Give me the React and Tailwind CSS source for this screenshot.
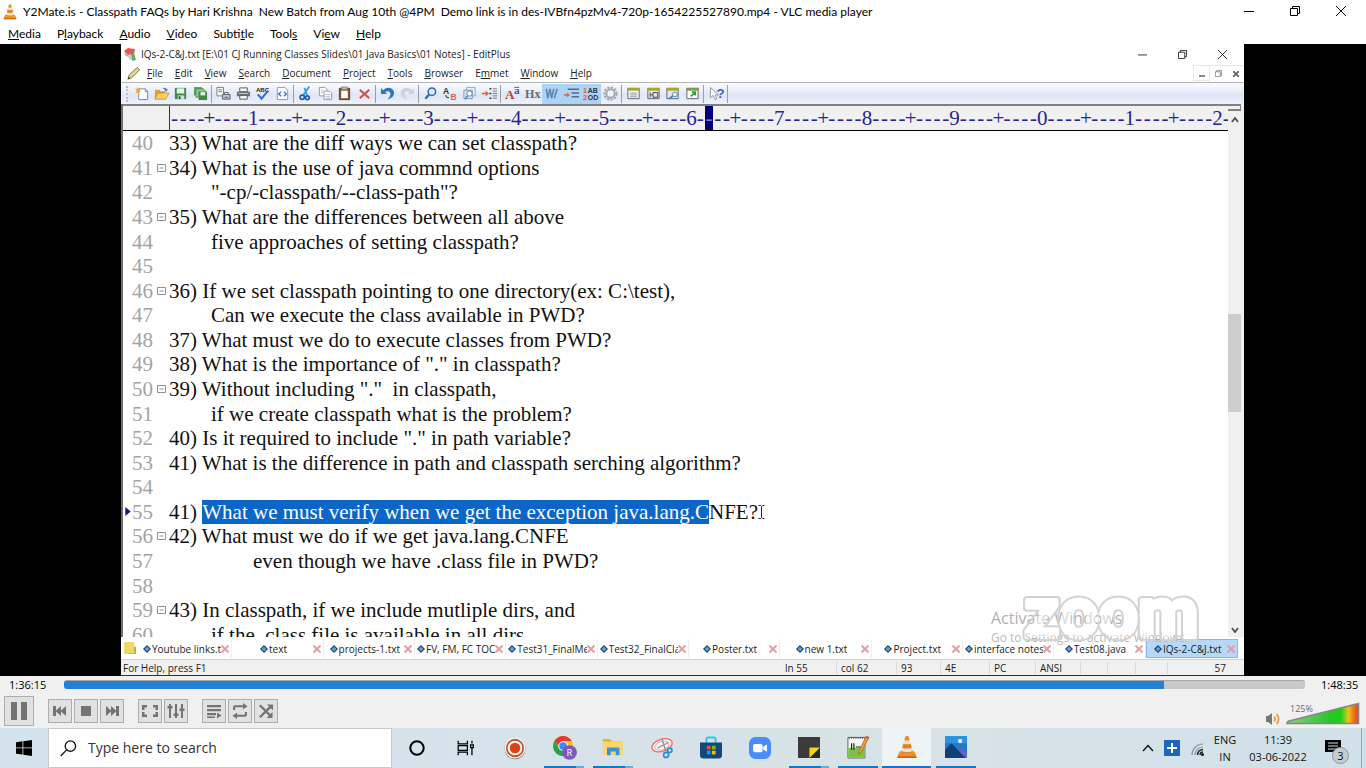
import React from "react";

const UI = "font-['Open_Sans','Noto_Sans',sans-serif]";
const SERIF = "font-['Liberation_Serif',serif]";

/* ---------- shared pieces ---------- */

function Cone({ className }) {
  return (
    <svg viewBox="0 0 24 24" className={className} aria-hidden="true">
      <path d="M4.6 16.5h14.8l2.1 5c.2.8-.2 1.5-1 1.5h-17c-.8 0-1.2-.7-1-1.5z" fill="#ef8a1d" />
      <path d="M2.5 21.5h19v.4c0 .7-.4 1.1-1 1.1h-17c-.6 0-1-.4-1-1.1z" fill="#c9600a" />
      <path d="M10.4 1.6c.3-.9 2.9-.9 3.2 0L18.500 18c-1 2.300-12 2.300-13 0z" fill="#e4e4e4" />
      <path d="M10.4 1.6c.3-.9 2.9-.9 3.2 0l1 3.4c-1 .8-4.200.8-5.200 0z" fill="#f08a24" />
      <path d="M8.400 8.400c1.600 1.200 5.600 1.200 7.200 0l1.200 4c-1.900 1.600-7.700 1.600-9.600 0z" fill="#ee7f16" />
      <path d="M6.200 15.600c2.200 2 9.400 2 11.600 0l.7 2.400c-1 2.300-12 2.300-13 0z" fill="#f0861c" />
    </svg>
  );
}

function MenuLabel({ text, at }) {
  return (
    <>
      {text.slice(0, at)}
      <u className="underline-offset-1">{text[at]}</u>
      {text.slice(at + 1)}
    </>
  );
}

function Minimise({ className }) {
  return (
    <svg viewBox="0 0 10 10" className={className} stroke="currentColor" fill="none" aria-hidden="true">
      <path d="M0 5.5h10" />
    </svg>
  );
}
function Restore({ className }) {
  return (
    <svg viewBox="0 0 10 10" className={className} stroke="currentColor" fill="none" aria-hidden="true">
      <path d="M.5 2.5h7v7h-7zM2.5 2.5v-2h7v7h-2" />
    </svg>
  );
}
function Close({ className }) {
  return (
    <svg viewBox="0 0 10 10" className={className} stroke="currentColor" fill="none" aria-hidden="true">
      <path d="M0 0l10 10M10 0L0 10" />
    </svg>
  );
}

/* ---------- player title and menu ---------- */

const PLAYER_MENU = [
  ["Media", 0], ["Playback", 1], ["Audio", 0], ["Video", 0],
  ["Subtitle", 5], ["Tools", 4], ["View", 2], ["Help", 0],
];

function PlayerHeader() {
  return (
    <header className="shrink-0 bg-white font-['Lato','Open_Sans',sans-serif] text-black">
      <div className="flex h-6 items-center pr-[2px] pl-[2px]">
        <Cone className="mr-[5px] size-4" />
        <h1 className="flex-1 whitespace-pre text-[12px] leading-4">
          {"Y2Mate.is - Classpath FAQs by Hari Krishna  New Batch from Aug 10th @4PM  Demo link is in des-IVBfn4pzMv4-720p-1654225527890.mp4 - VLC media player"}
        </h1>
        <div className="flex pb-[2px]">
          <button aria-label="Minimise" className="flex h-5 w-[46px] items-center justify-center"><Minimise className="size-[10px]" /></button>
          <button aria-label="Restore" className="flex h-5 w-[46px] items-center justify-center"><Restore className="size-[10px]" /></button>
          <button aria-label="Close" className="flex h-5 w-[46px] items-center justify-center"><Close className="size-[10px]" /></button>
        </div>
      </div>
      <nav className="flex h-5 items-center gap-4 pl-2 text-[12px] leading-4">
        {PLAYER_MENU.map(([t, i]) => (
          <button key={t}><MenuLabel text={t} at={i} /></button>
        ))}
      </nav>
    </header>
  );
}

/* ---------- editor ---------- */

const EDITOR_MENU = [
  ["File", 0], ["Edit", 0], ["View", 0], ["Search", 0], ["Document", 0], ["Project", 0],
  ["Tools", 0], ["Browser", 0], ["Emmet", 1], ["Window", 0], ["Help", 0],
];

const T = {
  new: (<><path d="M5 3h7l2.5 2.5V14.500H5z" fill="#fff" stroke="#7d8794" /><path d="M12 3v3h3" fill="none" stroke="#7d8794" /><path d="M1 2l2 1.500L4 1l1 2.500 2-.5-1 2 2 1-2.500.5L5 9 4 7 1.500 8 3 5.500z" fill="#f3a51d" /></>),
  open: (<><path d="M1 4h5l1 1.500h5V13H1z" fill="#e2a129" /><path d="M4 7.500h12L12.500 14H1z" fill="#fbd25e" stroke="#b77c15" strokeWidth=".7" /><path d="M9 3c2-2 4-1 4.500.5l1.300-.5-1.500 3-2.500-1.800 1.200-.2C11.500 3 10.500 2.500 9 3z" fill="#4a72c0" /></>),
  save: (<><path d="M2 2h12v12H2z" fill="#3c8a43" /><path d="M4 2.500h8V8H4z" fill="#e9f3ea" /><path d="M5 10h7v4H5z" fill="#cfe2d1" /><path d="M6 11h2v3H6z" fill="#2b5a30" /></>),
  saveAll: (<><path d="M1 1h8l2 2v7H1z" fill="#5aa763" /><path d="M3 3h8l2 2v7H3z" fill="#8bc692" stroke="#39733f" strokeWidth=".6" /><path d="M6 6h9v9H6z" fill="#3c8a43" /><path d="M8 6.500h5V10H8z" fill="#e9f3ea" /></>),
  preview: (<><path d="M1 1.500h7v9H1z" fill="#fff" stroke="#6f7782" /><path d="M2.500 4h4M2.500 6h4" stroke="#6f7782" /><path d="M7 9h8v5H7z" fill="#c6cad0" stroke="#555d68" /><path d="M9 7h4v2H9zM9 12h4" fill="#fff" stroke="#555d68" /></>),
  print: (<><path d="M4 2h8v4H4z" fill="#fff" stroke="#555" /><path d="M1 6h14v5H1z" fill="#6c727b" /><path d="M3 8h10" stroke="#c9ccd1" /><path d="M4 10h8v4H4z" fill="#f4f4f4" stroke="#555" /></>),
  spell: (<><text x="1" y="6.500" fontSize="6.500" fontWeight="700" fill="#222" fontFamily="Liberation Sans">ABC</text><path d="M3 9l4 4.500L14 5" fill="none" stroke="#3a68c9" strokeWidth="2.200" /></>),
  code: (<><path d="M2.500 1.500h8l3 3v10h-11z" fill="#fff" stroke="#8d96a3" /><path d="M6.500 6L4 8.500 6.500 11M9.500 6L12 8.500 9.500 11" fill="none" stroke="#2f6fd0" strokeWidth="1.400" /></>),
  cut: (<><path d="M12 .5L5.500 10M7 2l2.500 8" stroke="#4a9bdc" strokeWidth="2" /><circle cx="4.500" cy="12" r="2.300" fill="none" stroke="#1d5da8" strokeWidth="1.800" /><circle cx="10" cy="12.500" r="2" fill="none" stroke="#1d5da8" strokeWidth="1.800" /></>),
  copy: (<><path d="M1.500 1.500h6l2 2v7h-8z" fill="#fff" stroke="#929aa5" /><path d="M6.500 5.500h6l2 2v7h-8z" fill="#fff" stroke="#929aa5" /><path d="M3 5h3M3 7h3M8 9h5M8 11h5M8 13h5" stroke="#b7bdc6" /></>),
  paste: (<><path d="M2.500 2.500h11v12h-11z" fill="#8a5a33" stroke="#5c3a1e" /><path d="M4.500 5h7v8h-7z" fill="#fff" /><path d="M5 1h6v3H5z" fill="#b9bdc4" stroke="#666" strokeWidth=".6" /></>),
  del: (<path d="M3 4l10 9M13 4L3 13" stroke="#d2504c" strokeWidth="2.200" />),
  undo: (<path d="M1 2v6.500h6.500L5.500 6.500c3-2 6-.5 5.500 2.500-.2 2-1.500 4-3.500 5.500 5.500-1 8-4.500 7.500-8C14 2 8 0 3.500 4.500z" fill="#2e78bb" />),
  redo: (<path d="M15 2v6.500H8.500l2-2c-3-2-6-.5-5.500 2.500.2 2 1.500 4 3.500 5.500-5.500-1-8-4.500-7.500-8C2 2 8 0 12.500 4.500z" fill="#cdd2d9" />),
  find: (<><circle cx="9.500" cy="6" r="4" fill="#dcebfb" stroke="#2f67b2" strokeWidth="1.600" /><path d="M6.500 9L2.500 13.500" stroke="#2f67b2" strokeWidth="2.400" /></>),
  replace: (<><text x="0" y="8" fontSize="9" fontWeight="700" fill="#333" fontFamily="Liberation Sans">A</text><text x="8" y="14.500" fontSize="9" fontWeight="700" fill="#e0633a" fontFamily="Liberation Sans">B</text><path d="M3 9.500c0 2 1 3 3.500 3" fill="none" stroke="#444" strokeWidth="1.200" /></>),
  findFiles: (<><path d="M5 1.500h9v9H5z" fill="#eaf1fa" stroke="#8ea3bf" /><path d="M2 4.500h9v9H2z" fill="#d4e2f3" stroke="#7c95b6" /><circle cx="8" cy="8" r="2.800" fill="#fff" stroke="#5d7fae" /><path d="M6 10.500L3 14" stroke="#5d7fae" strokeWidth="1.600" /></>),
  goto: (<><path d="M0 8h5" stroke="#e2632d" strokeWidth="1.600" /><path d="M4 5l3.500 3L4 11z" fill="#e2632d" /><path d="M8 3h2M8 8h2M8 13h2" stroke="#333" strokeWidth="1.600" /><path d="M11.500 3H16M11.500 5.500H16M11.500 8H16M11.500 10.500H16M11.500 13H16" stroke="#777" /></>),
  font: (<><text x="0" y="14" fontSize="14" fill="#c03a3a" fontWeight="700" fontFamily="Liberation Serif">A</text><text x="9.500" y="9" fontSize="12" fill="#4a5a9a" fontWeight="700" fontFamily="Liberation Serif">a</text><path d="M10 1.500h5" stroke="#4a5a9a" /></>),
  hex: (<text x="0" y="13" fontSize="13" fill="#6a6a6a" fontWeight="700" fontFamily="Liberation Serif">Hx</text>),
  wrap: (<><path d="M2.500 3l1.500 10 2.500-10L8 13l2.500-10M14 3l-3 10" stroke="#5f86b8" strokeWidth="1.700" fill="none" /></>),
  indent: (<><path d="M4 3.500h12M8 7.500h8M8 11.500h8" stroke="#5a6a80" strokeWidth="1.600" /><path d="M0 9.500h4" stroke="#e2632d" strokeWidth="1.600" /><path d="M3 7l3.500 2.500L3 12z" fill="#e2632d" /></>),
  lineNo: (<><text x="0" y="7.500" fontSize="8" fontWeight="700" fill="#e2632d" fontFamily="Liberation Sans">1</text><text x="5" y="7.500" fontSize="7.500" fontWeight="700" fill="#333" fontFamily="Liberation Sans">AB</text><text x="0" y="15" fontSize="8" fontWeight="700" fill="#e2632d" fontFamily="Liberation Sans">2</text><text x="5" y="15" fontSize="7.500" fontWeight="700" fill="#333" fontFamily="Liberation Sans">OD</text></>),
  gear: (<><circle cx="8" cy="8" r="6.400" fill="none" stroke="#a3a8b0" strokeWidth="2.400" strokeDasharray="2.400 1.300" /><circle cx="8" cy="8" r="4.400" fill="#eef0f3" stroke="#a3a8b0" strokeWidth="2" /></>),
  list: (<><path d="M2 2.500h12v11H2z" fill="#fff" stroke="#59606b" /><path d="M1.500 2h13v3h-13z" fill="#a5a62c" /><path d="M4 7.500h8M4 9.500h8M4 11.500h8" stroke="#8a8f98" /></>),
  panel: (<><path d="M2 2.500h12v11H2z" fill="#e6e8eb" stroke="#59606b" /><path d="M1.500 2h13v3h-13z" fill="#a5a62c" /><path d="M4.500 7v5M4.500 9.500h3M7.500 7h5v5h-5z" stroke="#3a4048" fill="none" /></>),
  output: (<><path d="M2 2.500h12v11H2z" fill="#dfe7f3" stroke="#59606b" /><path d="M1.500 2h13v3h-13z" fill="#a5a62c" /><circle cx="10.500" cy="9" r="2.500" fill="#fff" stroke="#4f7fc4" /><path d="M8.500 10.500L4.500 13.500" stroke="#4f7fc4" strokeWidth="2" fill="none" /></>),
  browser: (<><path d="M2 2.500h12v11H2z" fill="#fff" stroke="#59606b" /><path d="M1.500 2h13v3h-13z" fill="#7e9a52" /><path d="M6 11l5-4M11 10V6.500H7.500" stroke="#2fa02f" strokeWidth="1.800" fill="none" /></>),
  help: (<><path d="M1.500 1.500v11l3-2.500 2 4.500 2-1-2-4h3.500z" fill="#fff" stroke="#8a93a0" /><text x="8" y="13" fontSize="14" fontWeight="700" fill="#3b62b5" fontFamily="Liberation Sans">?</text></>),
};

const TOOL_GROUPS = [
  ["w-[78px] grid-cols-4", ["new", "open", "save", "saveAll"]],
  ["w-[78px] grid-cols-4", ["preview", "print", "spell", "code"]],
  ["w-[78px] grid-cols-4", ["cut", "copy", "paste", "del"]],
  ["w-[39px] grid-cols-2", ["undo", "redo"]],
  ["w-[78px] grid-cols-4", ["find", "replace", "findFiles", "goto"]],
  ["w-[117px] grid-cols-6", ["font", "hex", "wrap", "indent", "lineNo", "gear"]],
  ["w-[78px] grid-cols-4", ["list", "panel", "output", "browser"]],
  ["w-[20px] grid-cols-1", ["help"]],
];
const PRESSED = ["wrap", "indent", "lineNo"];

function Toolbar() {
  return (
    <div className="flex h-[22px] shrink-0 items-center border-t border-[#b4b6ba] bg-linear-to-b from-[#fbfcff] via-[#dfe6f6] via-60% to-[#eef2fb] pl-[5px]">
      <span className="mr-1 h-4 border-l-2 border-dotted border-[#bcbcd0]" />
      {TOOL_GROUPS.map(([cls, items], g) => (
        <React.Fragment key={g}>
          <div className={`grid ${cls}`}>
            {items.map((name) => (
              <button
                key={name}
                aria-label={name}
                className={`flex h-5 items-center justify-center ${PRESSED.includes(name) ? "bg-[#abd3f5]" : ""}`}
              >
                <svg viewBox="0 0 16 16" className="size-[15px] overflow-visible">{T[name]}</svg>
              </button>
            ))}
          </div>
          <span className="mx-px h-[18px] w-[2px] border-l border-[#9a9da5]" />
        </React.Fragment>
      ))}
    </div>
  );
}

const LINES = [
  [40, "33) What are the diff ways we can set classpath?"],
  [41, "34) What is the use of java commnd options", true],
  [42, "        \"-cp/-classpath/--class-path\"?"],
  [43, "35) What are the differences between all above", true],
  [44, "        five approaches of setting classpath?"],
  [45, ""],
  [46, "36) If we set classpath pointing to one directory(ex: C:\\test),", true],
  [47, "        Can we execute the class available in PWD?"],
  [48, "37) What must we do to execute classes from PWD?"],
  [49, "38) What is the importance of \".\" in classpath?"],
  [50, "39) Without including \".\"  in classpath,", true],
  [51, "        if we create classpath what is the problem?"],
  [52, "40) Is it required to include \".\" in path variable?"],
  [53, "41) What is the difference in path and classpath serching algorithm?"],
  [54, ""],
  [55, null],
  [56, "42) What must we do if we get java.lang.CNFE", true],
  [57, "                even though we have .class file in PWD?"],
  [58, ""],
  [59, "43) In classpath, if we include mutliple dirs, and", true],
  [60, "        if the .class file is available in all dirs"],
];

function Ruler() {
  const cells = Array.from({ length: 121 }, (_, i) => {
    const n = i + 1;
    if (n % 10 === 0) return String((n / 10) % 10);
    return n % 5 === 0 ? "+" : "-";
  });
  return (
    <div className={`flex h-[27px] shrink-0 overflow-hidden border-t-2 border-b border-t-[#808080] border-b-black bg-[#f0f0f0] pl-[46px] text-[21px] leading-6 text-[#26268f] ${SERIF}`}>
      <div className="-mr-[3px] flex flex-1 border-l border-[#26268f]">
        {cells.map((c, i) => (
          <span
            key={i}
            className={`flex min-w-0 flex-1 justify-center ${i === 61 ? "bg-[#00007c] text-[#8080c0]" : ""}`}
          >
            {c}
          </span>
        ))}
      </div>
    </div>
  );
}

function TextArea() {
  return (
    <div className="min-h-0 flex-1 overflow-hidden bg-white">
      <div className={`grid h-[516px] auto-rows-fr text-[21px] leading-6 text-[#111] ${SERIF}`}>
        {LINES.map(([n, text, fold]) => (
          <div key={n} className="flex min-h-0 items-center whitespace-pre">
            <span className="flex w-[9px] justify-center">
              {text === null && (
                <svg viewBox="0 0 6 10" className="h-[9px] w-[6px]"><path d="M0 0l6 5-6 5z" fill="#15157a" /></svg>
              )}
            </span>
            <span className="w-[21px] text-[#a3a3a3]">{n}</span>
            <span className="flex w-4 justify-center">
              {fold && (
                <svg viewBox="0 0 9 8" className="h-2 w-[9px]" fill="none" stroke="#909090"><path d="M.5.5h8v7h-8zM2.500 4h4" /></svg>
              )}
            </span>
            {text === null ? (
              <span className="flex items-center">
                {"41) "}
                <mark className="bg-[#0b66c8] text-white">What we must verify when we get the exception java.lang.C</mark>
                NFE?
                <svg viewBox="0 0 7 14" className="h-[14px] w-[7px]" fill="none" stroke="#222"><path d="M.5.5h2l1 1 1-1h2M3.500 1.500v11M.5 13.500h2l1-1 1 1h2" /></svg>
              </span>
            ) : (
              <span>{text}</span>
            )}
          </div>
        ))}
      </div>
    </div>
  );
}

const TABS = [
  "Youtube links.txt", "text", "projects-1.txt", "FV, FM, FC TOC.txt", "Test31_FinalMethod", "Test32_FinalClass",
  "Poster.txt", "new 1.txt", "Project.txt", "interface notes", "Test08.java", "IQs-2-C&J.txt",
];

function DocTabs() {
  return (
    <div className="flex h-[23px] shrink-0 items-center border-b border-[#d2d2d2] bg-white pt-px pr-[6px] pl-[3px] text-[10px] leading-[18px] text-[#1c1c1c]">
      <svg viewBox="0 0 14 14" className="mr-[4px] size-[13px]"><path d="M1 0h10v5h2v8H0V1z" fill="#ecd968" /><path d="M11 5h2v8H5v-1h6z" fill="#c8ab3a" /></svg>
      {TABS.map((t, i) => (
        <div
          key={t}
          className={`flex h-[19px] min-w-0 flex-1 items-center pr-[2px] ${i === TABS.length - 1 ? "border border-[#88b8e2] bg-[#b5d8f8]" : "border-r border-[#eeeeee]"}`}
        >
          <button className="flex min-w-0 flex-1 items-center justify-center overflow-hidden">
            <svg viewBox="0 0 8 8" className="mr-px ml-[2px] size-2 shrink-0"><path d="M4 0l4 4-4 4-4-4z" fill="#233a60" /><path d="M4 1.500l2.500 2.500-2.500 2.500-2.500-2.500z" fill="#58a4dc" /></svg>
            <span className="min-w-0 overflow-hidden whitespace-nowrap">{t}</span>
          </button>
          <button aria-label={`Close ${t}`}>
            <svg viewBox="0 0 8 8" className="size-2" stroke="#dfa0a5" strokeWidth="2"><path d="M.5.5l7 7M7.500.5l-7 7" /></svg>
          </button>
        </div>
      ))}
    </div>
  );
}

function StatusBar() {
  const cell = "border-r border-[#dadada] pl-1";
  return (
    <footer className="flex h-4 shrink-0 items-center border-b border-[#303030] bg-[#f0f0f0] pl-[2px] text-[10px] leading-[14px] text-[#1c1c1c]">
      <span className="flex-1">For Help, press F1</span>
      <span className={`w-[56px] ${cell}`}>ln 55</span>
      <span className={`w-[60px] ${cell}`}>col 62</span>
      <span className={`w-[44px] ${cell}`}>93</span>
      <span className={`w-[49px] ${cell}`}>4E</span>
      <span className={`w-[46px] ${cell}`}>PC</span>
      <span className={`w-[45px] ${cell}`}>ANSI</span>
      <span className="h-3 w-[27px] border-r border-[#dadada]" />
      <span className="h-3 w-[28px] border-r border-[#dadada]" />
      <span className="h-3 w-[32px] border-r border-[#dadada]" />
      <span className="w-[76px] pr-[18px] text-right">57</span>
    </footer>
  );
}

function EditorScrollbar() {
  return (
    <div className="flex w-4 shrink-0 flex-col items-center bg-[#f0f0f0] pr-[3px]">
      <div className="h-[7px] w-full border-t-2 border-r border-b-2 border-[#808080] bg-[#f0f0f0]" />
      <svg viewBox="0 0 8 6" className="mt-[6px] h-[6px] w-2" fill="none" stroke="#505050" strokeWidth="1.800"><path d="M1 5l3-4 3 4" /></svg>
      <div className="flex w-full flex-1 flex-col">
        <div className="flex-[191]" />
        <div className="flex-[97] bg-[#cdcdcd]" />
        <div className="flex-[215]" />
      </div>
      <svg viewBox="0 0 8 6" className="mb-1 h-[6px] w-2" fill="none" stroke="#505050" strokeWidth="1.800"><path d="M1 1l3 4 3-4" /></svg>
    </div>
  );
}

function Watermark() {
  return (
    <div className="pointer-events-none absolute right-[43px] bottom-3 h-[60px] w-[210px]">
      <p className="absolute top-[2px] left-0 whitespace-nowrap text-[16px] leading-6 text-[#b0b0b0]">Activate Windows</p>
      <p className="absolute top-[26px] left-0 whitespace-nowrap text-[12px] leading-4 text-[#bababa]">Go to Settings to activate Windows.</p>
      <svg viewBox="0 0 210 60" className="absolute inset-0 size-full overflow-visible" strokeLinejoin="round">
        <defs>
          <text id="brand" x="33" y="33" fontSize="70" fontWeight="700" fontFamily="Roboto, sans-serif">zoom</text>
        </defs>
        <mask id="rim" maskUnits="userSpaceOnUse" x="0" y="-30" width="230" height="100">
          <use href="#brand" fill="#fff" stroke="#fff" strokeWidth="8" />
          <use href="#brand" fill="#000" stroke="#000" strokeWidth="4" />
        </mask>
        <use href="#brand" fill="#fff" fillOpacity=".5" />
        <rect x="0" y="-30" width="230" height="100" fill="#d2d2d2" mask="url(#rim)" />
      </svg>
    </div>
  );
}

function Editor() {
  return (
    <section className="relative flex min-w-0 flex-1 flex-col bg-white text-[#222]">
      <div className="flex h-5 shrink-0 items-center pl-[2px]">
        <svg viewBox="0 0 14 14" className="mr-1 size-[14px]">
          <path d="M1 4l4-3 7 1-1 5-6 2z" fill="#dd5d55" /><path d="M1 6l4 1 1 3-3-1z" fill="#e6988f" /><path d="M5 8l3-1 1 5-3 1z" fill="#c8cfd8" /><path d="M8 7l3-1 2 7-4 1z" fill="#68ab6d" />
        </svg>
        <h2 className="flex-1 text-[10px] leading-4">{"IQs-2-C&J.txt [E:\\01 CJ Running Classes Slides\\01 Java Basics\\01 Notes] - EditPlus"}</h2>
        <div className="flex pr-[2px]">
          <button aria-label="Minimise document window" className="flex h-4 w-10 items-center justify-center"><Minimise className="size-[9px]" /></button>
          <button aria-label="Restore document window" className="flex h-4 w-10 items-center justify-center"><Restore className="size-[9px]" /></button>
          <button aria-label="Close document window" className="flex h-4 w-10 items-center justify-center"><Close className="size-[9px]" /></button>
        </div>
      </div>
      <div className="flex h-[18px] shrink-0 items-center pl-[5px]">
        <svg viewBox="0 0 16 16" className="mr-[6px] size-[15px]">
          <path d="M2 14l1.500-4.500L12 1.500l2.500 2.500L6 12.500z" fill="#e6d98a" stroke="#6e6a3c" /><path d="M2 14l.8-2.500 1.700 1.700z" fill="#333" />
        </svg>
        <nav className="flex flex-1 gap-3 text-[10px] leading-4">
          {EDITOR_MENU.map(([t, i]) => (<button key={t}><MenuLabel text={t} at={i} /></button>))}
        </nav>
        <div className="flex text-[#666]">
          <button aria-label="Minimise file" className="flex h-4 w-[17px] items-end justify-center border border-[#e8e8e8] pb-[3px]"><span className="h-[2px] w-[6px] bg-[#888]" /></button>
          <button aria-label="Restore file" className="flex h-4 w-[17px] items-center justify-center border-t border-[#e8e8e8]"><Restore className="size-[7px]" /></button>
          <button aria-label="Close file" className="flex h-4 w-[17px] items-center justify-center border-t border-[#e8e8e8]"><Close className="size-[6px] stroke-3" /></button>
        </div>
      </div>
      <Toolbar />
      <div className="flex min-h-0 flex-1">
        <div className="flex min-w-0 flex-1 flex-col border-l-2 border-[#707070]">
          <Ruler />
          <TextArea />
        </div>
        <EditorScrollbar />
      </div>
      <DocTabs />
      <StatusBar />
      <Watermark />
    </section>
  );
}

/* ---------- player controls ---------- */

const CTRL = [
  ["ml-[14px]", "Previous", <path key="p" d="M3 5h3v4.500L11 5v4.500L16 5v10l-5-4.500V15l-5-4.500V15H3z" />],
  ["ml-[2px]", "Stop", <path key="p" d="M5 5h10v10H5z" />],
  ["ml-[2px]", "Next", <path key="p" d="M17 5h-3v4.500L9 5v4.500L4 5v10l5-4.500V15l5-4.500V15h3z" />],
  ["ml-[14px]", "Full screen", <path key="p" d="M2 4h5v2.500H4.500V9H2zM13 4h5v5h-2.500V6.500H13zM2 11h2.500v2.500H7V16H2zM15.500 11H18v5h-5v-2.500h2.500z" />],
  ["ml-[2px]", "Extended settings", <path key="p" d="M3 3h2v14H3zM9 3h2v14H9zM15 3h2v14h-2zM1.500 5h5v2.500h-5zM7.500 12.500h5V15h-5zM13.500 7.500h5V10h-5z" />],
  ["ml-[14px]", "Playlist", <path key="p" d="M3 4h14v2.200H3zM3 8h14v2.200H3zM3 12h9v2.200H3zM3 15.500h8v1.500H3zM13 11.500l4.500 3L13 17.500z" />],
  ["ml-[2px]", "Loop", <path key="p" d="M3 9V6.500C3 5 4 4.200 5.500 4.200H13V2l4.500 3.300L13 8.500V6.300H5.200V9zM17 11v2.500c0 1.500-1 2.300-2.500 2.300H7V18l-4.500-3.300L7 11.500v2.200h7.800V11z" />],
  ["ml-[2px]", "Random", <path key="p" d="M3 5l1.600-1.400 9.800 9.300L16.500 11v6h-6l2.300-2.200zM3 15.500L13 5.500 11 3.500h6v6l-2.200-2.200L4.600 17z" />],
];

function PlayerControls() {
  const played = (5775 / 6515) * 100;
  return (
    <section className="shrink-0 bg-[#f0f0f0]">
      <div className="flex h-[18px] items-center gap-4 px-[9px] text-[11px] leading-4 text-black">
        <span className="w-[39px] whitespace-nowrap">1:36:15</span>
        <input
          type="range"
          aria-label="Playback position"
          min="0"
          max="6515"
          defaultValue="5775"
          className="mb-[1px] h-[9px] min-w-0 flex-1 appearance-none rounded-[3px] border-t border-[#a8a8a8] [&::-webkit-slider-thumb]:size-0 [&::-webkit-slider-thumb]:appearance-none"
          style={{ background: `linear-gradient(to right, #2480d2 ${played}%, #c9c9c9 ${played}%)` }}
        />
        <span className="w-[36px] whitespace-nowrap">1:48:35</span>
      </div>
      <div className="flex h-[34px] items-center pl-1">
        <button aria-label="Pause" className="flex size-[30px] items-center justify-center border border-[#adadad] bg-[#e1e1e1]">
          <svg viewBox="0 0 16 18" className="h-[18px] w-4" fill="#747474"><path d="M0 0h6v18H0zM10 0h6v18h-6z" /></svg>
        </button>
        {CTRL.map(([m, label, icon]) => (
          <button key={label} aria-label={label} className={`flex size-6 items-center justify-center border border-[#adadad] bg-[#e1e1e1] ${m}`}>
            <svg viewBox="0 0 20 20" className="size-5" fill="#747474">{icon}</svg>
          </button>
        ))}
        <button aria-label="Mute" className="mt-4 ml-auto">
          <svg viewBox="0 0 16 14" className="h-[14px] w-4">
            <path d="M1 4h2l4-3v12l-4-3H1z" fill="#777" />
            <path d="M9 4.500c1.300 1.500 1.300 3.500 0 5M11.500 2c2.600 3 2.600 7 0 10" fill="none" stroke="#f0962b" strokeWidth="1.600" />
          </svg>
        </button>
        <div className="relative mr-[6px] ml-[5px] h-[28px] w-[74px]">
          <svg viewBox="0 0 74 28" className="h-[28px] w-[74px]">
            <defs>
              <linearGradient id="volume">
                <stop offset="0" stopColor="#8fd08b" /><stop offset=".6" stopColor="#2ac32a" /><stop offset=".75" stopColor="#18d016" />
                <stop offset=".86" stopColor="#e8c51a" /><stop offset=".95" stopColor="#f4601e" /><stop offset="1" stopColor="#e24520" />
              </linearGradient>
            </defs>
            <path d="M1 26.500c0-1 .5-2 2-2.500L72.500 6.500v20z" fill="url(#volume)" stroke="#858585" strokeWidth="1.600" />
          </svg>
          <span className="absolute top-[6px] left-[4px] text-[9px] leading-3 text-[#6a6a6a]">125%</span>
          <input type="range" aria-label="Volume" min="0" max="125" defaultValue="125" className="absolute inset-0 w-full opacity-0" />
        </div>
      </div>
    </section>
  );
}

/* ---------- taskbar ---------- */

const TASKS = [
  ["Cortana", "", <circle key="c" cx="12" cy="12" r="7.300" fill="none" stroke="#000" strokeWidth="2.200" />],
  ["Task view", "", <path key="t" d="M3.500 4v3.500h10V4M3.500 20v-3.500h10V20M3.500 9.500h10v5h-10zM18.500 4v3M18.500 12v8M17 8.500h3v3h-3z" fill="none" stroke="#000" strokeWidth="1.400" />],
  ["Recorder", "", <g key="r"><circle cx="12" cy="12.800" r="11.500" fill="#8a8580" /><circle cx="12" cy="12" r="11.300" fill="#fff" /><circle cx="12" cy="12" r="9" fill="none" stroke="#c6502b" strokeWidth="2" /><circle cx="12" cy="12" r="5.800" fill="#de4212" /></g>],
  ["Chrome", "multi", <g key="g"><circle cx="11" cy="11" r="11" fill="#fbc116" /><path d="M1.500 5.500A11 11 0 0 1 20.500 5.500H11L6.500 12z" fill="#e33b2e" /><path d="M1.500 5.500A11 11 0 0 0 11 22l4.600-8-9-1z" fill="#2ba24c" /><circle cx="11" cy="11" r="5.300" fill="#fff" /><circle cx="11" cy="11" r="4.200" fill="#4285f4" /><circle cx="18" cy="18" r="8" fill="#7e57c2" /><text x="18" y="21.500" textAnchor="middle" fontSize="9.500" fill="#fff" fontFamily="Roboto, sans-serif">R</text></g>],
  ["File Explorer", "multi", <g key="f"><path d="M1 3.500h8l2 2.500h11v14H1z" fill="#e9a91e" /><path d="M1 6h21.500v14.500H1z" fill="#fcd667" /><path d="M5.500 12.500h13.500V21h-4v-4h-5.500v4h-4z" fill="#3a94d6" /></g>],
  ["Snipping Tool", "", <g key="s" fill="none"><ellipse cx="12" cy="9" rx="11.500" ry="6.500" transform="rotate(-18 12 9)" stroke="#ee6b6b" strokeWidth="1.400" fill="#f4f4f4" /><ellipse cx="12" cy="9.500" rx="8" ry="4.500" transform="rotate(-18 12 9.500)" stroke="#f0a6a6" /><path d="M12 2l4 13M7 12l12-6" stroke="#8b9298" strokeWidth="1.500" /><circle cx="16.500" cy="19.500" r="2.800" stroke="#2a8fd0" strokeWidth="1.800" /><circle cx="20.500" cy="14.500" r="2.400" stroke="#2a8fd0" strokeWidth="1.800" /></g>],
  ["Microsoft Store", "", <g key="m"><path d="M7 7V2.500C7 1 7.500.5 9 .5h6c1.500 0 2 .5 2 2V7" fill="none" stroke="#2cc3f2" strokeWidth="2" /><path d="M0 6h24v14c0 2-1 3.500-3.500 3.500h-17C1 23.500 0 22 0 20z" fill="#14477e" /><path d="M7.500 9.500h4v4h-4z" fill="#f25022" /><path d="M13 9.500h4v4h-4z" fill="#7fba00" /><path d="M7.500 15h4v4h-4z" fill="#00a4ef" /><path d="M13 15h4v4h-4z" fill="#ffb900" /></g>],
  ["Zoom", "", <g key="z"><rect x="0" y="0" width="24" height="24" rx="7" fill="#4a8cff" /><rect x="4.500" y="7.500" width="10.300" height="9" rx="2" fill="#fff" /><path d="M15.400 11l4.200-2.800v8l-4.200-2.700z" fill="#fff" /></g>],
  ["Sticky Notes", "multi", <g key="n"><path d="M0 1h24v12L13 24H0z" fill="#3b3b3b" /><path d="M12.500 12.500H24V24H12.500z" fill="#2a2a2a" /><path d="M12.500 12.500H24L12.500 24z" fill="#fbd511" /></g>],
  ["Notepad++", "single", <g key="p"><path d="M1 1.500h18.500V24H1z" fill="#f4f6f2" stroke="#5a5f57" /><path d="M1.500 13h17.500v10.500H1.500z" fill="#7cc243" /><path d="M2 2h17" stroke="#555" strokeWidth="2" strokeDasharray="1.200 1.200" /><path d="M5 8v7M7.500 8v7M9.500 12h6" stroke="#222" strokeWidth="1.300" /><path d="M21 0l3 1.500L15.500 18l-3 2 .5-3.500z" fill="#e9a13a" stroke="#8b5a18" strokeWidth=".7" /><path d="M21 0l3 1.500-1 1.800-3-1.500z" fill="#d9534f" /></g>],
  ["VLC", "active", null],
  ["Photos", "single", <g key="h"><path d="M0 0h24v24H0z" fill="#2478cc" /><path d="M0 0h24v8H0z" fill="#2e93e2" /><circle cx="16.500" cy="5.500" r="2.300" fill="#fff" /><path d="M12 24l6-12 6 6v6z" fill="#5c66c8" /><path d="M0 15l7-7 15.500 16H0z" fill="#123e76" /></g>],
];

function Task({ label, state, icon }) {
  return (
    <button
      aria-label={label}
      className={`flex h-10 w-[49px] shrink-0 flex-col items-center justify-between ${state === "active" ? "bg-[#eef3f6]" : ""}`}
    >
      <span className="flex flex-1 items-center">
        {icon ? <svg viewBox="0 0 24 24" className="size-[22px] overflow-visible">{icon}</svg> : <Cone className="size-6" />}
      </span>
      {state === "multi" && (
        <span className="flex h-[2px] w-10"><span className="w-8 bg-[#0a78d6]" /><span className="flex-1 bg-[#66abe4]" /></span>
      )}
      {state === "single" && <span className="h-[2px] w-10 bg-[#0a78d6]" />}
      {state === "active" && <span className="h-[2px] w-full bg-[#0a78d6]" />}
    </button>
  );
}

function Taskbar() {
  return (
    <footer className="flex h-10 shrink-0 items-center bg-linear-to-r from-[#d3e3eb] via-[#d8e2e7] via-70% to-[#d0e1e9] text-[#111]">
      <button aria-label="Start" className="flex h-10 w-12 items-center justify-center">
        <svg viewBox="0 0 16 16" className="size-4" fill="#000"><path d="M0 2.200l6.500-.9v6.200H0zM7.300 1.200L16 0v7.500H7.300zM0 8.300h6.500v6.300L0 13.700zM7.300 8.300H16V16l-8.700-1.200z" /></svg>
      </button>
      <label className="flex h-10 w-[344px] items-center border border-[#c6c9cb] bg-white pl-[11px]">
        <svg viewBox="0 0 18 18" className="mr-[11px] size-[17px]" fill="none" stroke="#111" strokeWidth="1.400"><circle cx="11" cy="6.500" r="5.500" /><path d="M7 10.500L.8 17" /></svg>
        <input type="text" aria-label="Search" placeholder="Type here to search" className="min-w-0 flex-1 bg-transparent text-[14px] leading-5 outline-none placeholder:text-[#333]" />
      </label>
      {TASKS.map(([label, state, icon]) => <Task key={label} label={label} state={state} icon={icon} />)}
      <div className="ml-auto flex h-10 items-center">
        <button aria-label="Show hidden icons" className="mr-[10px]">
          <svg viewBox="0 0 12 8" className="h-2 w-3" fill="none" stroke="#111" strokeWidth="1.400"><path d="M1 7l5-5.500L11 7" /></svg>
        </button>
        <svg viewBox="0 0 16 16" className="mr-[11px] size-4"><path d="M0 0h16v16H0z" fill="#1b66bf" /><path d="M8 3v10M3 8h10" stroke="#fff" strokeWidth="2" /></svg>
        <svg viewBox="0 0 13 13" className="mt-[3px] mr-[9px] size-[13px]" fill="none">
          <path d="M1 12A11 11 0 0 1 12 1M4 12a8 8 0 0 1 8-8" stroke="#8c979d" strokeWidth="1.200" />
          <path d="M6.500 12A5.500 5.500 0 0 1 12 6.500M9 12a3 3 0 0 1 3-3" stroke="#222" strokeWidth="1.400" />
          <circle cx="11.500" cy="11.500" r="1.500" fill="#111" />
        </svg>
        <span className="w-6 text-center text-[11px] leading-[17px]">ENG<br />IN</span>
        <time className="ml-2 w-[66px] whitespace-nowrap text-center text-[11px] leading-[17px]">11:39<br />03-06-2022</time>
        <button aria-label="3 notifications" className="relative ml-[14px] flex h-10 w-6 items-center">
          <svg viewBox="0 0 16 16" className="size-4"><path d="M0 0h16v12h-4l-3 3.500V12H0z" fill="#000" /><path d="M3 3h10M3 6h10M3 9h10" stroke="#d0e1e9" /></svg>
          <span className="absolute right-0 bottom-1 flex size-[17px] items-center justify-center rounded-full border border-[#8d9498] bg-[#c5cdd1] text-[11px] leading-none">3</span>
        </button>
        <span className="ml-3 h-10 w-[5px] border-l border-[#9aa7ae]" />
      </div>
    </footer>
  );
}

export default function App() {
  return (
    <div className={`flex h-screen flex-col overflow-hidden ${UI}`}>
      <PlayerHeader />
      <main className="flex min-h-0 flex-1 bg-black pr-[122px] pl-[121px]">
        <Editor />
      </main>
      <PlayerControls />
      <Taskbar />
    </div>
  );
}
